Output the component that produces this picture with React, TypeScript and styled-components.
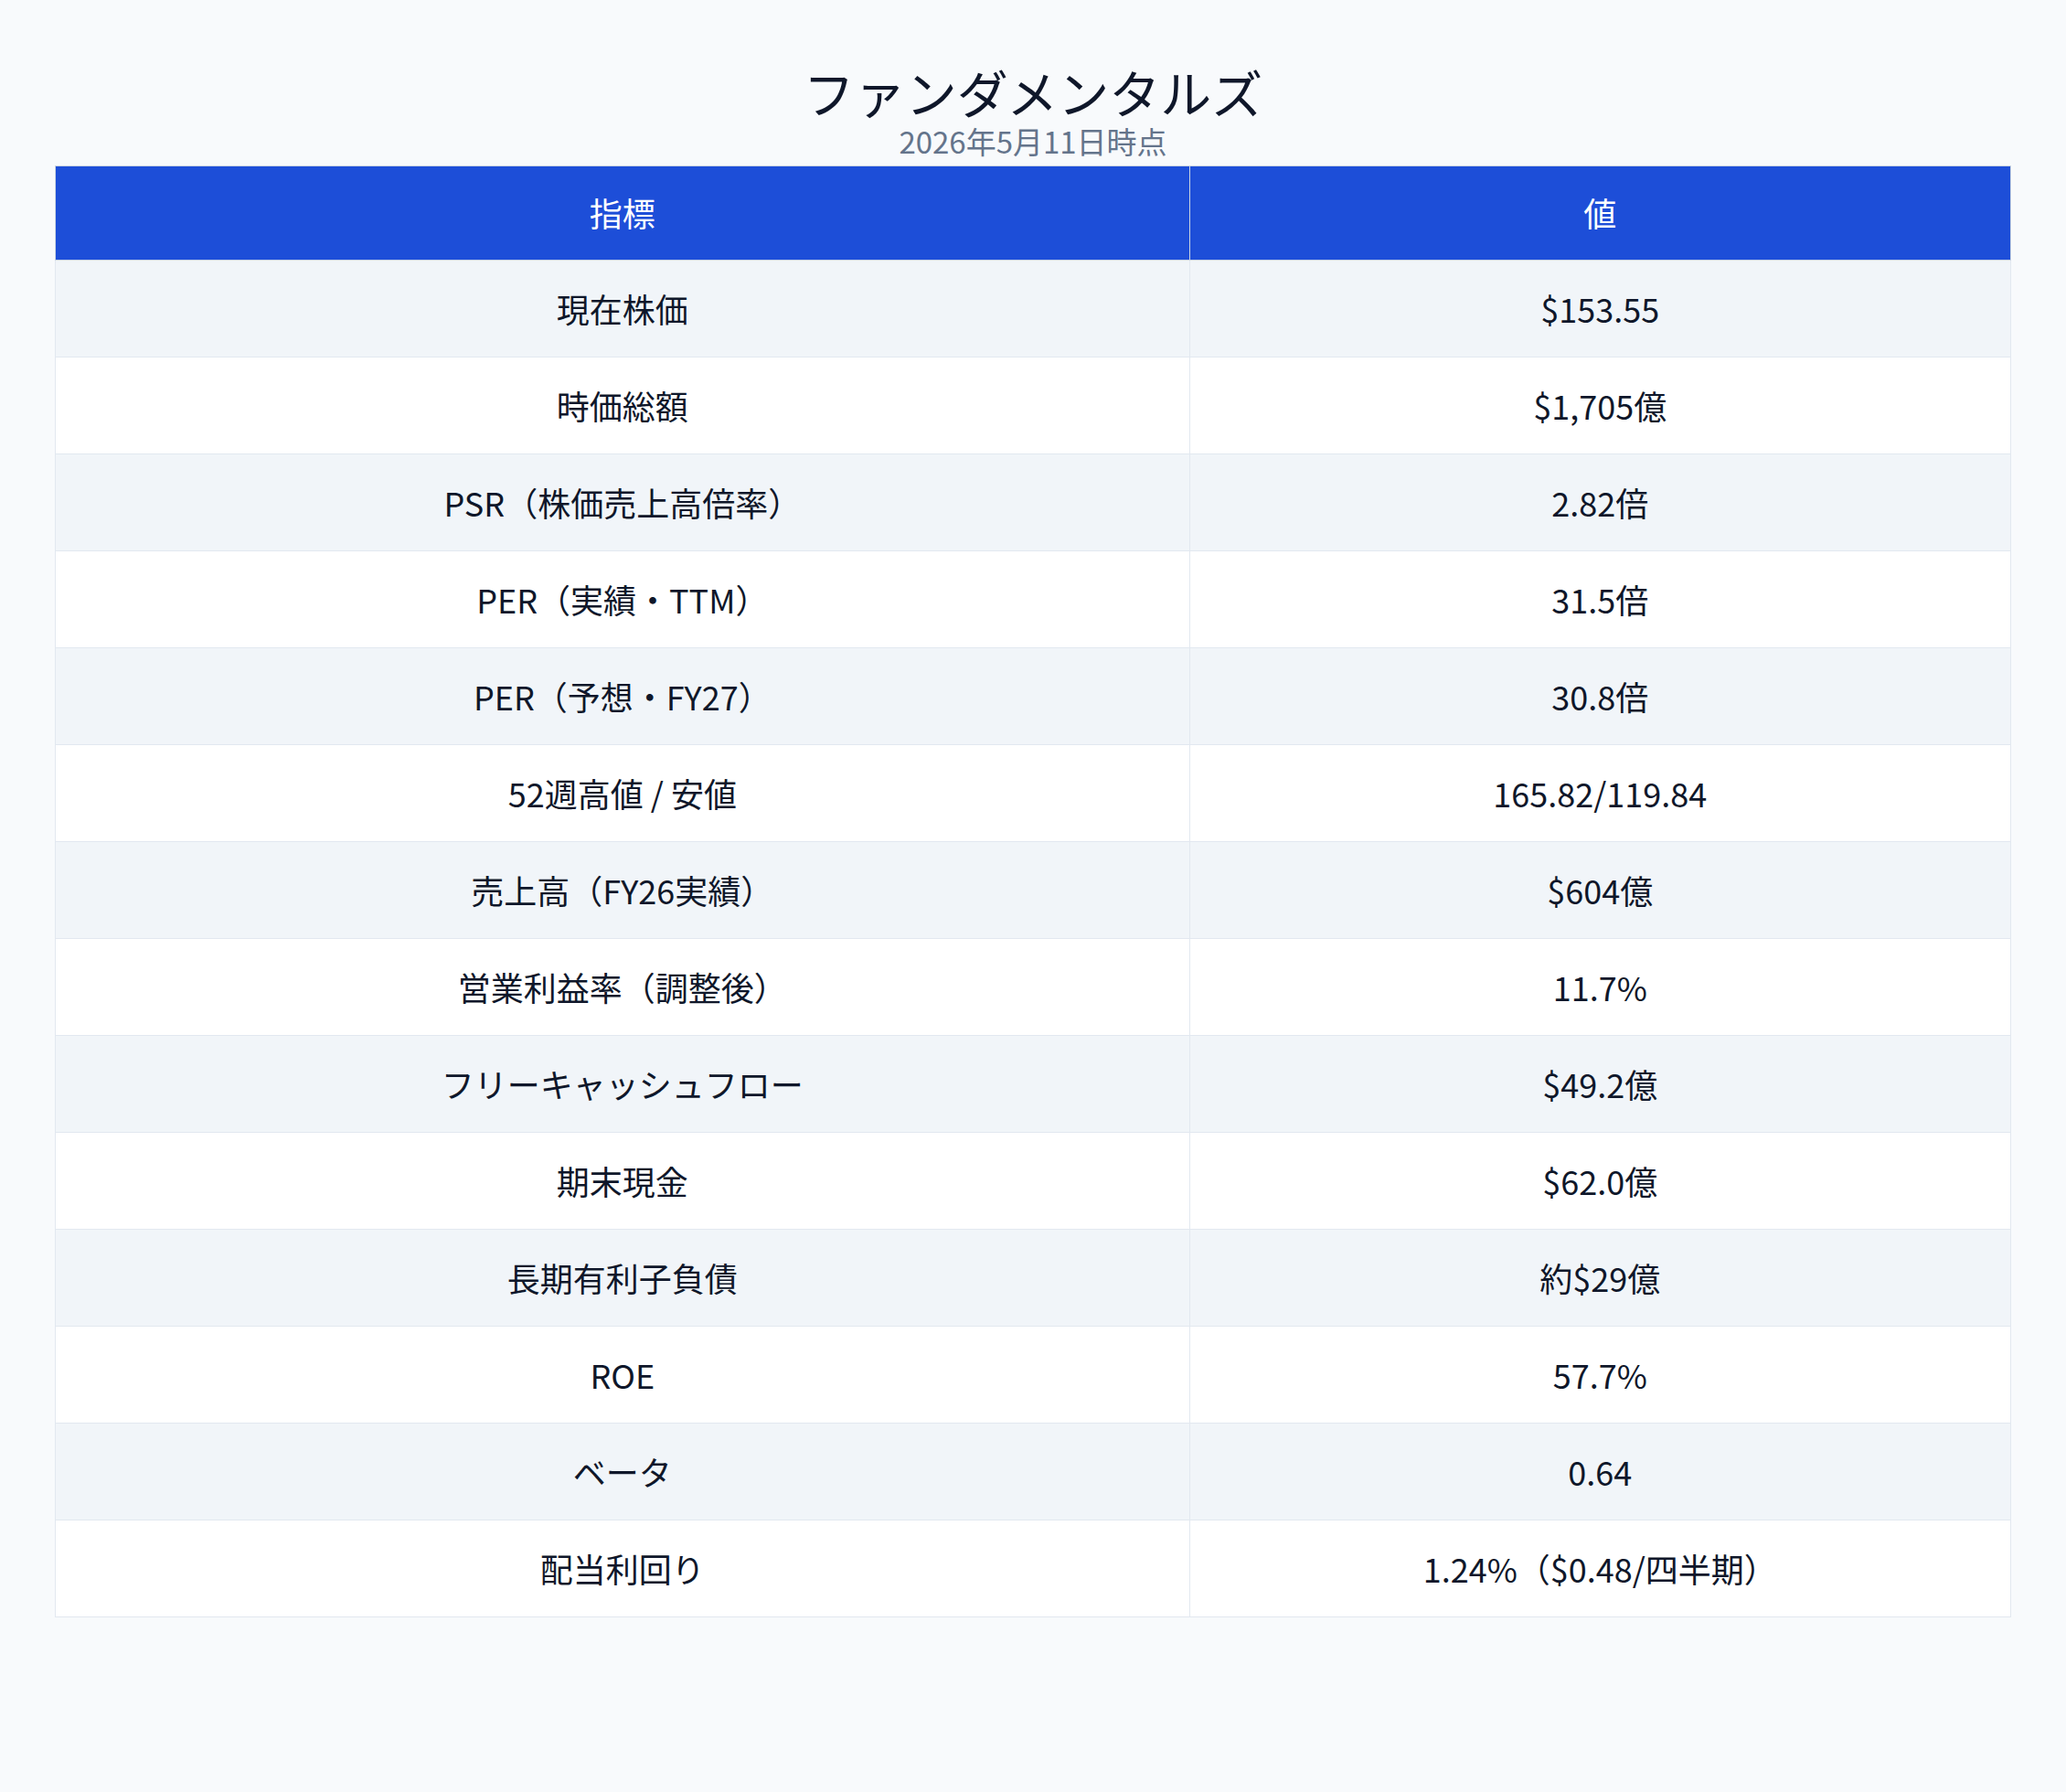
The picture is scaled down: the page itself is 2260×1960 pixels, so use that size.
import React from "react";
import styled, { createGlobalStyle } from "styled-components";

const GlobalStyle = createGlobalStyle`
  body {
    margin: 0;
    background: #f8fafc;
    font-family: "Noto Sans CJK JP", "Noto Sans", sans-serif;
    color: #0f172a;
  }
`;

const rows: [string, string][] = [
  ["現在株価", "$153.55"],
  ["時価総額", "$1,705億"],
  ["PSR（株価売上高倍率）", "2.82倍"],
  ["PER（実績・TTM）", "31.5倍"],
  ["PER（予想・FY27）", "30.8倍"],
  ["52週高値 / 安値", "165.82/119.84"],
  ["売上高（FY26実績）", "$604億"],
  ["営業利益率（調整後）", "11.7%"],
  ["フリーキャッシュフロー", "$49.2億"],
  ["期末現金", "$62.0億"],
  ["長期有利子負債", "約$29億"],
  ["ROE", "57.7%"],
  ["ベータ", "0.64"],
  ["配当利回り", "1.24%（$0.48/四半期）"],
];

const Page = styled.div`
  padding: 66px 60px 60px;
`;

const Title = styled.h1`
  margin: 0;
  text-align: center;
  font-size: 56px;
  line-height: 68px;
  font-weight: 400;
`;

const Subtitle = styled.div`
  text-align: center;
  font-size: 33px;
  line-height: 40px;
  color: #64748b;
  margin-bottom: 7px;
`;

const Table = styled.table`
  width: 100%;
  border-collapse: collapse;
  background: #fff;
  table-layout: fixed;
`;

const Th = styled.th`
  background: #1d4ed8;
  color: #fff;
  font-weight: 400;
  font-size: 36px;
  line-height: 51px;
  padding: 25px 16px 26px;
  border: 1px solid #cbd5e1;
`;

const Row = styled.tr<{ $striped: boolean }>`
  background: ${(p) => (p.$striped ? "#f1f5f9" : "#ffffff")};
`;

const Td = styled.td`
  text-align: center;
  font-size: 36px;
  line-height: 51px;
  padding: 27px 16px 27px;
  border: 1px solid #e2e8f0;
`;

export default function App() {
  return (
    <Page>
      <GlobalStyle />
      <Title>ファンダメンタルズ</Title>
      <Subtitle>2026年5月11日時点</Subtitle>
      <Table>
        <colgroup>
          <col style={{ width: "58%" }} />
          <col />
        </colgroup>
        <thead>
          <tr>
            <Th>指標</Th>
            <Th>値</Th>
          </tr>
        </thead>
        <tbody>
          {rows.map(([k, v], i) => (
            <Row key={k} $striped={i % 2 === 0}>
              <Td>{k}</Td>
              <Td>{v}</Td>
            </Row>
          ))}
        </tbody>
      </Table>
    </Page>
  );
}
